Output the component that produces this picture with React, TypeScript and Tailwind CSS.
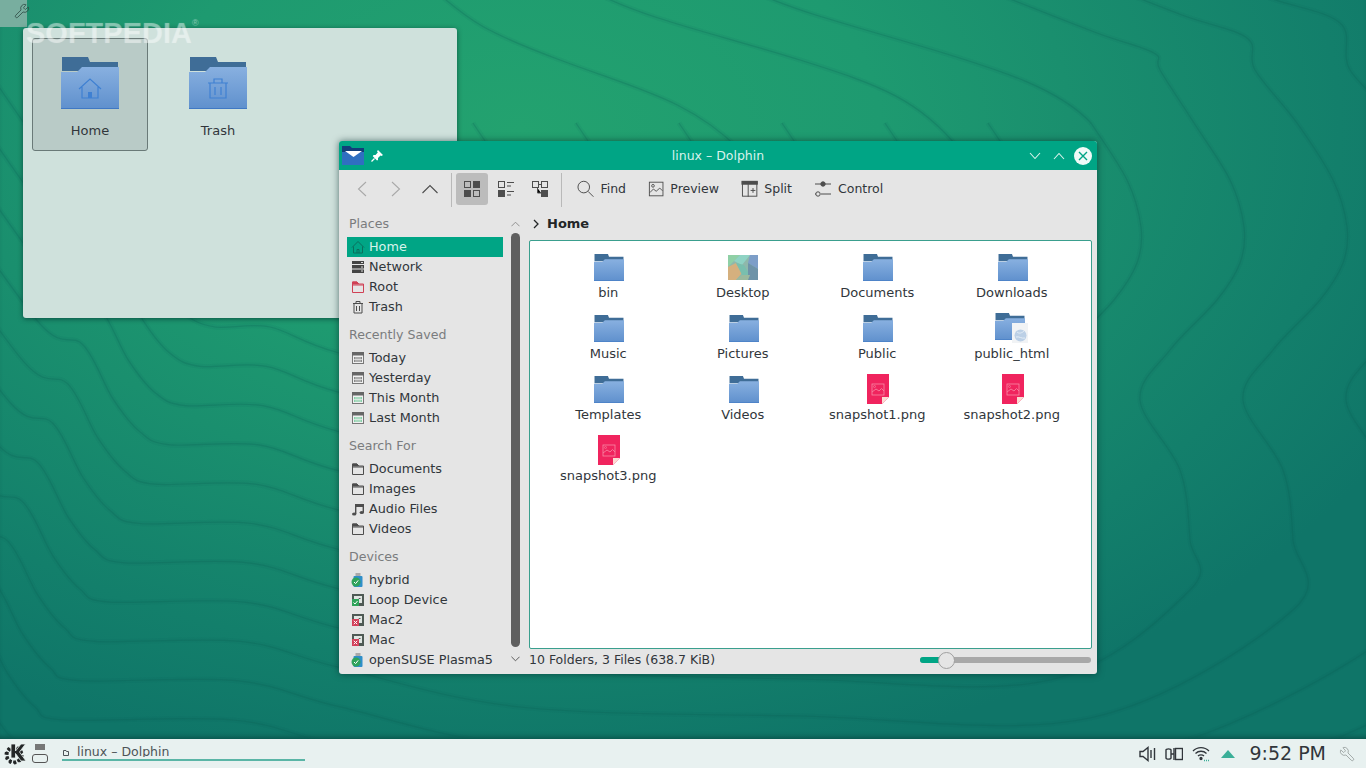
import React from 'react';
import {Wrench} from 'lucide-react';

// wallpaper contour lines: every control point moves linearly with the ring index
const ringPoints = (k: number): number[][] => {
    const fx = 215 - 15 * k;
    const fy = 327 + 39.3 * k;
    const m = k - 7;
    const left = [
        [fx - 230, fy - 260],
        [fx - 130, fy - 121],
        [fx - 87, fy - 100],
        [fx - 57, fy - 46],
        [fx - 30, fy - 13],
        [fx, fy],
        [270 - 3.7 * k, fy],
        [339, 353 + 39.3 * k],
        [520, 395 + 39 * k],
        [800, 420 + 37 * k],
        [1050 + 40 * m, 680 + 38 * m],
        [1190 + 103 * m, 590 + 20 * m],
        [1190 + 103 * m, 540],
        [1180 + 103 * m, 470],
        [1140 + 103 * m, 400],
        [1170 + 103 * m, 350],
        [1217 + 103 * m, 300],
        [1240 + 103 * m, 263],
        [1244 + 103 * m, 227],
        [1230 + 103 * m, 180],
        [1194 + 103 * m, 123],
    ];
    // inner rings run on behind the window, only the outer ones reach the top edge
    if (k < 7) return left;
    return [
        ...left,
        [1160 + 95 * m, 70],
        [1154 + 93 * m, 53 - 15 * m],
        [1097 + 85 * m, 33 - 18 * m],
        [1000 + 85 * m, -5 - 18 * m],
    ];
};

const ringPath = (k: number) => {
    const p = ringPoints(k);
    let d = `M${p[0][0]} ${p[0][1]}`;
    for (let i = 0; i < p.length - 1; i++) {
        const a = p[Math.max(i - 1, 0)];
        const b = p[i];
        const c = p[i + 1];
        const e = p[Math.min(i + 2, p.length - 1)];
        d += `C${b[0] + (c[0] - a[0]) / 6} ${b[1] + (c[1] - a[1]) / 6} ${c[0] - (e[0] - b[0]) / 6} ${c[1] - (e[1] - b[1]) / 6} ${c[0]} ${c[1]}`;
    }
    return d;
};

const rings = [
    ...Array.from({length: 13}, (_, k) => ringPath(k)),
    'M1091 123C1060 90 1010 72 900 40S800 10 760 -5',
    'M960 150C920 100 880 85 800 60S650 20 600 -5',
    'M740 150C690 100 640 90 560 60S470 20 440 -5',
];

const Wallpaper = () => (
    <svg className="absolute inset-0" width="1366" height="739" viewBox="0 0 1366 739" fill="none">
        {rings.map((d, i) => (
            <g key={i}>
                <path d={d} stroke="#0b5f55" strokeOpacity="0.08" strokeWidth="5"/>
                <path d={d} stroke="#0b5f55" strokeOpacity="0.24" strokeWidth="1.2"/>
            </g>
        ))}
    </svg>
);

const Folder = ({w = 30, h = 27, id, children}: { w?: number; h?: number; id: string; children?: React.ReactNode }) => (
    <svg width={w} height={h} viewBox="0 0 58 52">
        <defs>
            <linearGradient id={id} x1="0" y1="0" x2="0" y2="1">
                <stop offset="0" stopColor="#88b0e0"/>
                <stop offset="1" stopColor="#5f90cd"/>
            </linearGradient>
        </defs>
        <path d="M1 0H27L29 5H57V14H1Z" fill="#3f6d97"/>
        <path d="M0 15H16L21 10H58V52H0Z" fill={`url(#${id})`}/>
        <rect x="0" y="51" width="58" height="1" fill="#3f78c4"/>
        {children}
    </svg>
);

const HomeSmall = ({color}: { color: string }) => (
    <svg width="14" height="14" viewBox="0 0 14 14" fill="none" stroke={color} strokeWidth="1">
        <path d="M1 7.5L7 1.5L13 7.5M2.5 6.5V13H11.5V6.5M6 13V9.5H8V13"/>
    </svg>
);

const TrashSmall = () => (
    <svg width="14" height="14" viewBox="0 0 14 14" fill="none" stroke="#4d4d4d" strokeWidth="1">
        <path d="M2 3.5H12M5 3.5V1.5H9V3.5M3 3.5V13H11V3.5M5.5 6V11M8.5 6V11"/>
    </svg>
);

const NetworkSmall = () => (
    <svg width="14" height="14" viewBox="0 0 14 14">
        <rect x="1" y="1" width="12" height="12" fill="#444"/>
        <path d="M1 4.5H13M1 9H13" stroke="#e5e5e5" strokeWidth="1"/>
        <path d="M10 2.5H12M10 7H12M10 11H12" stroke="#ddd" strokeWidth="1"/>
    </svg>
);

const FolderOutline = ({color}: { color: string }) => (
    <svg width="14" height="14" viewBox="0 0 14 14" fill="none" stroke={color} strokeWidth="1">
        <path d="M1.5 12.5V2H6L7.5 4H12.5V12.5Z"/>
        <path d="M1.5 5H12.5" strokeWidth="1"/>
        <path d="M1.5 2H6L7.5 4H1.5Z" fill={color}/>
    </svg>
);

const Calendar = ({color}: { color: string }) => (
    <svg width="14" height="14" viewBox="0 0 14 14">
        <rect x="1.5" y="2.5" width="11" height="10" fill="#f0f0f0" stroke="#777"/>
        <rect x="1" y="1" width="12" height="3.5" fill="#666"/>
        <rect x="3" y="6" width="8" height="5" fill={color}/>
        <path d="M5 6V11M7 6V11M9 6V11M3 8.5H11" stroke="#eee" strokeWidth="0.7"/>
    </svg>
);

const Music = () => (
    <svg width="14" height="14" viewBox="0 0 14 14" fill="#4d4d4d">
        <path d="M4 2H13V10.5H11.6V5H5.4V12H4Z"/>
        <ellipse cx="3.2" cy="12" rx="2.2" ry="1.6"/>
        <ellipse cx="10.8" cy="10.5" rx="2.2" ry="1.6"/>
    </svg>
);

const Usb = () => (
    <svg width="14" height="15" viewBox="0 0 14 15">
        <rect x="4.5" y="0" width="5" height="3" fill="#aaa"/>
        <rect x="2.5" y="3" width="9" height="11" rx="1" fill="#2f8fc9"/>
        <circle cx="5" cy="9" r="4.5" fill="#2fa35a"/>
        <path d="M3 9L4.6 10.6L7.2 7.4" stroke="#fff" strokeWidth="1" fill="none"/>
    </svg>
);

const Disk = ({color, mark}: { color: string; mark: 'ok' | 'x' }) => (
    <svg width="14" height="14" viewBox="0 0 14 14">
        <rect x="1" y="1" width="12" height="12" fill="#4f5a55"/>
        <rect x="3" y="3" width="8" height="7" fill="#dfe5e2"/>
        <path d="M5 8.5L8 5.5L9.5 5.5" stroke="#555" fill="none"/>
        <rect x="1" y="6" width="7" height="7" fill={color}/>
        {mark === 'ok'
            ? <path d="M2.5 9.5L4 11L6.5 8" stroke="#fff" fill="none"/>
            : <path d="M2.8 7.8L6.2 11.2M6.2 7.8L2.8 11.2" stroke="#fff" fill="none"/>}
    </svg>
);

const Snapshot = () => (
    <svg width="22" height="30" viewBox="0 0 22 30" fill="none">
        <path d="M0 0H22V23L15 30H0Z" fill="#f0245e"/>
        <path d="M15 30L22 23H15Z" fill="#fbdcd4"/>
        <rect x="5" y="10" width="12" height="11" stroke="#f78aa6" strokeWidth="0.8"/>
        <path d="M5 18L9 15L12 17L14.5 14.5L17 17" stroke="#f78aa6" strokeWidth="0.8"/>
        <circle cx="7.5" cy="12.5" r="1" stroke="#f78aa6" strokeWidth="0.6"/>
    </svg>
);

const DesktopThumb = () => (
    <svg width="30" height="25" viewBox="0 0 30 25">
        <rect width="30" height="25" fill="#8fb8ab"/>
        <polygon points="0,0 12,0 0,12" fill="#8fd0a6"/>
        <polygon points="12,0 22,0 14,10 6,6" fill="#8fd3c4"/>
        <polygon points="22,0 30,0 30,14 20,8" fill="#7d9ec8"/>
        <polygon points="0,12 8,8 14,18 8,25 0,25" fill="#d5b07e"/>
        <polygon points="8,8 16,10 22,20 14,20" fill="#79bfae"/>
        <polygon points="20,8 30,14 30,25 20,25" fill="#6e93a8"/>
        <polygon points="14,20 22,20 20,25 8,25" fill="#9bb99d"/>
    </svg>
);

const PublicHtml = () => (
    <div className="relative w-[33px] h-[30px]">
        <Folder w={30} h={27} id="pub"/>
        <div className="absolute right-0 bottom-0 w-[16px] h-[20px] bg-[#f1f3f5] flex items-end justify-center pb-[1px]">
            <svg width="13" height="13" viewBox="0 0 13 13">
                <circle cx="6.5" cy="6.5" r="6" fill="#bcd0e6"/>
                <path d="M3 3C5 5 8 4 10 2M2 8C5 7 8 10 11 9" stroke="#e4edf6" fill="none"/>
            </svg>
        </div>
    </div>
);

const KdeLogo = () => (
    <svg width="22" height="22" viewBox="0 0 22 22">
        <circle cx="10" cy="12" r="7" fill="none" stroke="#232627" strokeWidth="3" strokeDasharray="3 1.4"/>
        <circle cx="10" cy="12" r="8.5" fill="none" stroke="#232627" strokeWidth="2" strokeDasharray="2.4 3"/>
        <path d="M7 1H11.5V8L17 1H21.5L15.5 9L22 18H17L11.5 10.5V15H7Z" fill="#232627" stroke="#e8f1f0" strokeWidth="0.8"/>
    </svg>
);

const tree = [
    {title: 'Places', items: [
        {label: 'Home', icon: <HomeSmall color="#0b6f5c"/>, active: true},
        {label: 'Network', icon: <NetworkSmall/>},
        {label: 'Root', icon: <FolderOutline color="#d04055"/>},
        {label: 'Trash', icon: <TrashSmall/>},
    ]},
    {title: 'Recently Saved', items: [
        {label: 'Today', icon: <Calendar color="#8a8a8a"/>},
        {label: 'Yesterday', icon: <Calendar color="#8a8a8a"/>},
        {label: 'This Month', icon: <Calendar color="#86d0a8"/>},
        {label: 'Last Month', icon: <Calendar color="#86d0a8"/>},
    ]},
    {title: 'Search For', items: [
        {label: 'Documents', icon: <FolderOutline color="#4d4d4d"/>},
        {label: 'Images', icon: <FolderOutline color="#4d4d4d"/>},
        {label: 'Audio Files', icon: <Music/>},
        {label: 'Videos', icon: <FolderOutline color="#4d4d4d"/>},
    ]},
    {title: 'Devices', items: [
        {label: 'hybrid', icon: <Usb/>},
        {label: 'Loop Device', icon: <Disk color="#2fa35a" mark="ok"/>},
        {label: 'Mac2', icon: <Disk color="#d2405a" mark="x"/>},
        {label: 'Mac', icon: <Disk color="#d2405a" mark="x"/>},
        {label: 'openSUSE Plasma5', icon: <Usb/>},
    ]},
];

const files = [
    {name: 'bin', kind: 'folder'}, {name: 'Desktop', kind: 'desktop'}, {name: 'Documents', kind: 'folder'}, {name: 'Downloads', kind: 'folder'},
    {name: 'Music', kind: 'folder'}, {name: 'Pictures', kind: 'folder'}, {name: 'Public', kind: 'folder'}, {name: 'public_html', kind: 'html'},
    {name: 'Templates', kind: 'folder'}, {name: 'Videos', kind: 'folder'}, {name: 'snapshot1.png', kind: 'image'}, {name: 'snapshot2.png', kind: 'image'},
    {name: 'snapshot3.png', kind: 'image'},
];

const FileIcon = ({kind, id}: { kind: string; id: string }) => {
    if (kind === 'desktop') return <DesktopThumb/>;
    if (kind === 'html') return <PublicHtml/>;
    if (kind === 'image') return <Snapshot/>;
    return <Folder id={id}/>;
};

const ToolButton = ({icon, label, className}: { icon: React.ReactNode; label: string; className: string }) => (
    <div className={`flex items-center gap-[6px] h-[32px] ${className}`}>
        {icon}
        <span>{label}</span>
    </div>
);

const ViewBtn = ({children, active}: { children: React.ReactNode; active?: boolean }) => (
    <div className={`flex items-center justify-center h-[32px] rounded-[3px] ${active ? 'w-[32px] bg-[#bcbcbc] mr-[1px]' : 'w-[34px]'}`}>
        {children}
    </div>
);

const App = () => {
    return (
        <div className="w-[1366px] h-[768px] overflow-hidden flex flex-col text-[13px] text-[#31363b] font-['DejaVu_Sans',sans-serif]">
            <div className="relative flex-1 bg-[radial-gradient(ellipse_1000px_650px_at_520px_130px,#23a26f_0%,#1e9a70_36%,#1a8f6e_55%,#137f6b_82%,#0f7568_100%)] shadow-[inset_0_-5px_5px_-3px_rgba(0,40,40,0.45)]">
                <Wallpaper/>

                {/* desktop toolbox */}
                <div className="absolute left-0 top-0 w-[27px] h-[27px] bg-[#78ae9f] flex items-start justify-end">
                    <Wrench size={16} strokeWidth={1.2} color="#2f4a44" className="mt-[3px] mr-[-3px]"/>
                </div>

                {/* folder view */}
                <div className="absolute left-[23px] top-[28px] w-[434px] h-[290px] bg-[#cfe1dc] rounded-[3px] shadow-[0_1px_5px_rgba(0,40,40,0.6)] flex items-start gap-[12px] pt-[10px] pl-[9px]">
                    <div className="w-[116px] h-[113px] flex flex-col items-center pt-[18px] bg-[#b9cbc7] border border-[#6a7a78] rounded-[3px]">
                        <Folder w={58} h={52} id="desk1">
                            <path d="M18 32L29 22L40 32M21 30V41H37V30" fill="none" stroke="#3f80d2" strokeWidth="1.2"/>
                            <rect x="27" y="35" width="4" height="6" fill="#3f80d2"/>
                        </Folder>
                        <span className="mt-[13px] leading-[18px]">Home</span>
                    </div>
                    <div className="w-[116px] h-[113px] flex flex-col items-center pt-[18px] border border-transparent">
                        <Folder w={58} h={52} id="desk2">
                            <path d="M19 26H39M25 26V22H33V26M21 26V41H37V26M26 30V38M32 30V38" fill="none" stroke="#3f80d2" strokeWidth="1.2"/>
                        </Folder>
                        <span className="mt-[13px] leading-[18px]">Trash</span>
                    </div>
                </div>

                {/* dolphin window */}
                <div className="absolute left-[339px] top-[141px] w-[758px] h-[533px] flex flex-col bg-[#e5e5e5] rounded-[3px] overflow-hidden shadow-[0_0_7px_rgba(0,40,40,0.6)]">
                    <div className="relative h-[29px] shrink-0 bg-[#00a585] flex items-center justify-between text-[#d9f3ec]">
                        <div className="flex items-center pl-[3px]">
                            <svg width="22" height="19" viewBox="0 0 22 19">
                                <path d="M0 0H8L10 2H22V19H0Z" fill="#2f6fc0"/>
                                <path d="M0 0H8L10 2H22V6H0Z" fill="#123e7a"/>
                                <path d="M3 5H20L11.5 11Z" fill="#fff"/>
                            </svg>
                            <svg width="14" height="14" viewBox="0 0 14 14" className="ml-[6px]" fill="#fff">
                                <path d="M8 1L13 6L11.5 7L10.5 6.5L8 9L8 11L7 11.5L2.8 7.2L3.5 6H5.5L7.8 3.5L7 2.2Z"/>
                                <path d="M4.5 9.5L1.5 12.5" stroke="#fff" strokeWidth="1.2"/>
                            </svg>
                        </div>
                        <span className="absolute inset-x-0 text-center text-[12.5px] pt-[1px]">linux – Dolphin</span>
                        <div className="flex items-center pr-[5px]">
                            <svg width="12" height="8" viewBox="0 0 12 8" fill="none" stroke="#d9f3ec" strokeWidth="1.1" className="mr-[12px]"><path d="M1 1L6 6.5L11 1"/></svg>
                            <svg width="12" height="8" viewBox="0 0 12 8" fill="none" stroke="#d9f3ec" strokeWidth="1.1" className="mr-[9px]"><path d="M1 7L6 1.5L11 7"/></svg>
                            <svg width="18" height="18" viewBox="0 0 18 18">
                                <circle cx="9" cy="9" r="9" fill="#f0faf7"/>
                                <path d="M5 5L13 13M13 5L5 13" stroke="#00a585" strokeWidth="1.4"/>
                            </svg>
                        </div>
                    </div>

                    <div className="h-[38px] shrink-0 flex items-start pt-[3px] pl-[6px] text-[12.5px]">
                        <div className="w-[34px] h-[32px] flex items-center justify-center">
                            <svg width="10" height="16" viewBox="0 0 10 16" fill="none" stroke="#a9a9a9" strokeWidth="1.1"><path d="M9 1L1.5 8L9 15"/></svg>
                        </div>
                        <div className="w-[34px] h-[32px] flex items-center justify-center">
                            <svg width="10" height="16" viewBox="0 0 10 16" fill="none" stroke="#a9a9a9" strokeWidth="1.1"><path d="M1 1L8.5 8L1 15"/></svg>
                        </div>
                        <div className="w-[34px] h-[32px] flex items-center justify-center">
                            <svg width="16" height="10" viewBox="0 0 16 10" fill="none" stroke="#4d4d4d" strokeWidth="1.1"><path d="M0.5 9L8 1.5L15.5 9"/></svg>
                        </div>
                        <div className="w-px h-[34px] bg-[#b9b9b9] ml-[4px] mr-[4px]"/>
                        <ViewBtn active>
                            <svg width="16" height="16" viewBox="0 0 16 16">
                                <rect x="0.5" y="0.5" width="6" height="6" fill="none" stroke="#4d4d4d"/>
                                <rect x="9" y="0" width="7" height="7" fill="#4d4d4d"/>
                                <rect x="0" y="9" width="7" height="7" fill="#4d4d4d"/>
                                <rect x="9.5" y="9.5" width="6" height="6" fill="none" stroke="#4d4d4d"/>
                            </svg>
                        </ViewBtn>
                        <ViewBtn>
                            <svg width="16" height="16" viewBox="0 0 16 16">
                                <rect x="0.5" y="0.5" width="6" height="6" fill="none" stroke="#4d4d4d"/>
                                <rect x="0" y="9" width="7" height="7" fill="#4d4d4d"/>
                                <path d="M9 1.5H16M9 5H13M9 10.5H16M9 14H13" stroke="#4d4d4d"/>
                            </svg>
                        </ViewBtn>
                        <ViewBtn>
                            <svg width="16" height="16" viewBox="0 0 16 16">
                                <rect x="0.5" y="0.5" width="6" height="6" fill="none" stroke="#4d4d4d"/>
                                <rect x="9.5" y="0.5" width="6" height="6" fill="none" stroke="#4d4d4d"/>
                                <path d="M7 3.5H9M5.5 7V12H9" stroke="#4d4d4d"/>
                                <rect x="9" y="9" width="7" height="7" fill="#4d4d4d"/>
                            </svg>
                        </ViewBtn>
                        <div className="w-px h-[34px] bg-[#b9b9b9] ml-[4px]"/>
                        <ToolButton label="Find" className="ml-[15px] w-[49px]" icon={
                            <svg width="18" height="18" viewBox="0 0 18 18" fill="none" stroke="#4d4d4d" strokeWidth="1">
                                <circle cx="7" cy="7" r="6"/>
                                <path d="M11.5 11.5L17 17"/>
                            </svg>
                        }/>
                        <ToolButton label="Preview" className="ml-[22px] w-[71px]" icon={
                            <svg width="18" height="18" viewBox="0 0 18 18" fill="none" stroke="#4d4d4d" strokeWidth="1">
                                <rect x="1.5" y="1.5" width="15" height="15"/>
                                <circle cx="5.5" cy="5.5" r="1.5"/>
                                <path d="M2 13L6 9L9 11.5L13 8L16 11"/>
                            </svg>
                        }/>
                        <ToolButton label="Split" className="ml-[22px] w-[51px]" icon={
                            <svg width="18" height="18" viewBox="0 0 18 18" fill="none" stroke="#4d4d4d" strokeWidth="1">
                                <rect x="1.5" y="1.5" width="15" height="15"/>
                                <rect x="1" y="1" width="16" height="3" fill="#4d4d4d"/>
                                <path d="M7.5 4V17M10 10.5H15M12.5 8V13"/>
                            </svg>
                        }/>
                        <ToolButton label="Control" className="ml-[22px]" icon={
                            <svg width="18" height="18" viewBox="0 0 18 18" fill="none" stroke="#4d4d4d" strokeWidth="1">
                                <path d="M1 4H17M7 14H17M1 14H2"/>
                                <circle cx="9" cy="4" r="2.2" fill="#4d4d4d"/>
                                <circle cx="4" cy="14" r="2.2" fill="#e5e5e5"/>
                            </svg>
                        }/>
                    </div>

                    <div className="flex-1 flex min-h-0">
                        <div className="w-[172px] shrink-0 pt-[5px] pl-[8px] text-[12.8px]">
                            {tree.map((section) => (
                                <div key={section.title} className="mb-[7px]">
                                    <div className="h-[20px] leading-[22px] pl-[2px] mb-[4px] text-[#7a7c7e] text-[12.6px]">{section.title}</div>
                                    {section.items.map((item) => (
                                        <div key={item.label} className={`flex items-center h-[20px] w-[156px] pl-[4px] gap-[4px] whitespace-nowrap ${item.active ? 'bg-[#00a585] text-[#d9f3ec]' : ''}`}>
                                            <span className="w-[14px] flex justify-center">{item.icon}</span>
                                            <span>{item.label}</span>
                                        </div>
                                    ))}
                                </div>
                            ))}
                        </div>

                        <div className="w-[18px] shrink-0 flex flex-col items-start">
                            <div className="h-[25px] w-[9px] flex items-center justify-center pt-[7px]">
                                <svg width="10" height="6" viewBox="0 0 10 6" fill="none" stroke="#8a8a8a"><path d="M0.5 5.5L5 1L9.5 5.5"/></svg>
                            </div>
                            <div className="w-[9px] h-[414px] rounded-full bg-[#5f5f5f]"/>
                            <div className="flex-1 w-[9px] flex items-center justify-center pb-[3px]">
                                <svg width="10" height="6" viewBox="0 0 10 6" fill="none" stroke="#4d4d4d"><path d="M0.5 0.5L5 5L9.5 0.5"/></svg>
                            </div>
                        </div>

                        <div className="flex-1 flex flex-col min-w-0 pr-[5px]">
                            <div className="h-[32px] shrink-0 flex items-center gap-[8px] pl-[4px] text-[#232627]">
                                <svg width="6" height="10" viewBox="0 0 6 10" fill="none" stroke="#232627" strokeWidth="1.3"><path d="M1 1L5 5L1 9"/></svg>
                                <span className="font-bold">Home</span>
                            </div>
                            <div className="h-[409px] shrink-0 bg-white border border-[#3a9f8e] rounded-[2px] grid grid-cols-[repeat(4,134.5px)] auto-rows-[61px] pl-[11px] pt-[10px]">
                                {files.map((file) => (
                                    <div key={file.name} className="flex flex-col items-center">
                                        <div className={`h-[32px] flex items-center justify-center ${file.kind === 'folder' || file.kind === 'image' ? 'ml-[2px]' : ''}`}>
                                            <FileIcon kind={file.kind} id={`f-${file.name.replace(/\W/g, '')}`}/>
                                        </div>
                                        <span className="leading-[18px] mt-[1px]">{file.name}</span>
                                    </div>
                                ))}
                            </div>
                            <div className="flex-1 flex items-center justify-between pb-[4px] text-[12.5px]">
                                <span className="pt-[1px]">10 Folders, 3 Files (638.7 KiB)</span>
                                <div className="relative w-[171px] h-[6px] mr-[1px] rounded-full bg-[#a9a9a9]">
                                    <div className="w-[27px] h-full rounded-l-full bg-[#00a585]"/>
                                    <div className="absolute left-[18px] top-[-5px] w-[17px] h-[17px] rounded-full bg-[#e5e5e5] border border-[#a0a0a0]"/>
                                </div>
                            </div>
                        </div>
                    </div>
                </div>

                {/* watermark */}
                <div className="absolute left-[26px] top-[15px] flex items-start text-white/25 font-['Liberation_Sans',sans-serif] font-bold text-[29px] leading-[36px] [text-shadow:0_0_1px_rgba(255,255,255,0.3)]">
                    SOFTPEDIA<span className="text-[9px] leading-[14px] mt-[1px] font-normal">®</span>
                </div>
            </div>

            {/* panel */}
            <div className="h-[29px] shrink-0 bg-[#e8f1f0] flex items-center">
                <div className="ml-[4px] w-[22px] flex justify-center"><KdeLogo/></div>
                <div className="ml-[6px] w-[16px] flex flex-col items-center gap-[4px]">
                    <div className="w-[10px] h-[6px] bg-[#777]"/>
                    <div className="w-[16px] h-[9px] rounded-[3px] border border-[#555]"/>
                </div>
                <div className="ml-[14px] w-[243px] flex flex-col self-start mt-[6px]">
                    <div className="h-[12px] overflow-hidden flex items-start pl-[1px] gap-[8px] text-[#4d5357] text-[12.5px]">
                        <svg width="6" height="6" viewBox="0 0 6 6" className="mt-[5px]" fill="none" stroke="#4d5357"><path d="M0.5 5.5V0.5H3L3.5 1.5H5.5V5.5Z"/></svg>
                        <span className="leading-[16px] mt-[-1px]">linux – Dolphin</span>
                    </div>
                    <div className="h-[2px] bg-[#5ab5a6] mt-[2px]"/>
                </div>
                <div className="flex-1"/>
                <svg width="18" height="16" viewBox="0 0 18 16" fill="none" stroke="#31363b" strokeWidth="1.4">
                    <path d="M1 5.5H4L9 1.5V14.5L4 10.5H1Z"/>
                    <path d="M12 4V12M15.5 2V14"/>
                </svg>
                <svg width="18" height="14" viewBox="0 0 18 14" fill="none" stroke="#31363b" strokeWidth="1.4" className="ml-[8px]">
                    <path d="M1 3C1 1.5 6 1.5 6 3V11C6 12.5 1 12.5 1 11ZM6 7H9M9 1V13"/>
                    <rect x="10.5" y="1.5" width="7" height="11"/>
                </svg>
                <svg width="18" height="16" viewBox="0 0 18 16" fill="none" stroke="#31363b" strokeWidth="1.3" className="ml-[9px]">
                    <path d="M1 5C5.5 0.5 12.5 0.5 17 5M3.5 7.5C6.5 4.5 11.5 4.5 14.5 7.5M6 10C7.5 8.5 10.5 8.5 12 10"/>
                    <circle cx="9" cy="12.5" r="1" fill="#31363b"/>
                    <path d="M12 14.5H17" stroke="#3aaf98" strokeDasharray="1 1" strokeWidth="1.5"/>
                </svg>
                <svg width="14" height="8" viewBox="0 0 14 8" className="ml-[11px]"><path d="M7 0L14 8H0Z" fill="#3aaf98"/></svg>
                <span className="ml-[14px] text-[19px] leading-none text-[#31363b] whitespace-nowrap">9:52 PM</span>
                <Wrench size={16} strokeWidth={1.1} color="#8a9190" className="ml-[13px] mr-[11px] -scale-x-100"/>
            </div>
        </div>
    );
};

export default App;
